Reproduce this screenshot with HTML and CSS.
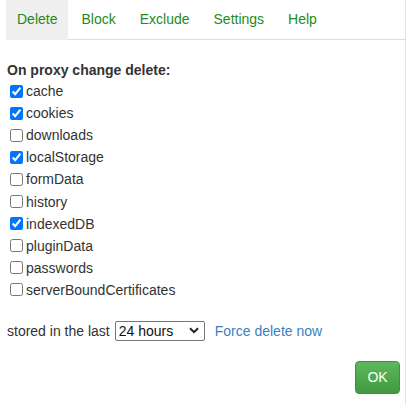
FILE: index.html
```html
<!DOCTYPE html>
<html>
<head>
<meta charset="utf-8">
<link rel="stylesheet" href="styles.css">
</head>
<body>
<div class="page">
  <ul class="tabs">
    <li class="tab active"><a>Delete</a></li>
    <li class="tab"><a>Block</a></li>
    <li class="tab"><a>Exclude</a></li>
    <li class="tab"><a>Settings</a></li>
    <li class="tab"><a>Help</a></li>
  </ul>
  <div class="content">
    <div class="heading">On proxy change delete:</div>
    <div class="list">
      <label class="row"><input type="checkbox" checked><span>cache</span></label>
      <label class="row"><input type="checkbox" checked><span>cookies</span></label>
      <label class="row"><input type="checkbox"><span>downloads</span></label>
      <label class="row"><input type="checkbox" checked><span>localStorage</span></label>
      <label class="row"><input type="checkbox"><span>formData</span></label>
      <label class="row"><input type="checkbox"><span>history</span></label>
      <label class="row"><input type="checkbox" checked><span>indexedDB</span></label>
      <label class="row"><input type="checkbox"><span>pluginData</span></label>
      <label class="row"><input type="checkbox"><span>passwords</span></label>
      <label class="row"><input type="checkbox"><span>serverBoundCertificates</span></label>
    </div>
    <div class="stored">
      <span>stored in the last</span>
      <div class="select"><span>24 hours</span><svg width="10" height="7" viewBox="0 0 10 7"><path d="M1 1.2 L5 5.2 L9 1.2" fill="none" stroke="#222" stroke-width="2"/></svg></div>
      <a class="link">Force delete now</a>
    </div>
    <div class="actions">
      <button class="ok">OK</button>
    </div>
  </div>
</div>
</body>
</html>
```
FILE: styles.css
```css
html, body {
  margin: 0;
  padding: 0;
  background: #fff;
}
body {
  font-family: "Liberation Sans", Arial, sans-serif;
  font-size: 14px;
  color: #333;
  line-height: 20px;
}
.page {
  width: 405px;
  height: 405px;
  border-right: 1px solid #e2e4e6;
  box-sizing: content-box;
}
.tabs {
  list-style: none;
  margin: 0 0 0 6px;
  padding: 0;
  display: flex;
  height: 39px;
  border-bottom: 1px solid #ddd;
}
.tab {
  margin-right: 2px;
  margin-bottom: -1px;
}
.tab a {
  display: block;
  height: 40px;
  box-sizing: border-box;
  padding: 9px 11px 0 11px;
  color: #1d8c1d;
}
.tab.active a {
  background: #efefef;
  border-bottom: 1px solid #efefef;
}
.content {
  padding: 0 5px 0 6px;
}
.heading {
  font-weight: bold;
  margin-top: 20px;
  padding-left: 1px;
}
.list {
  display: flex;
  flex-direction: column;
}
.row {
  display: flex;
  align-items: center;
  height: 22.1px;
}
.row input {
  width: 13px;
  height: 13px;
  margin: 0 3px 0 4px;
}
.stored {
  display: flex;
  align-items: center;
  margin-top: 20px;
  height: 20px;
  padding-left: 1px;
}
.select {
  margin-left: 5px;
  width: 90px;
  height: 20px;
  box-sizing: border-box;
  border: 1px solid #767676;
  border-radius: 2px;
  display: flex;
  align-items: center;
  justify-content: space-between;
  padding: 0 5px 0 3px;
  color: #111;
}
.link {
  margin-left: 10px;
  color: #3a7fc2;
}
.actions {
  display: flex;
  justify-content: flex-end;
  margin-top: 20px;
}
.ok {
  font-family: "Liberation Sans", Arial, sans-serif;
  font-size: 14px;
  line-height: 20px;
  width: 45px;
  height: 33px;
  padding: 0;
  margin-right: 0;
  color: #fff;
  background: linear-gradient(#5db85c, #419a41);
  border: 1px solid #3e8f3e;
  border-radius: 4px;
}
```
